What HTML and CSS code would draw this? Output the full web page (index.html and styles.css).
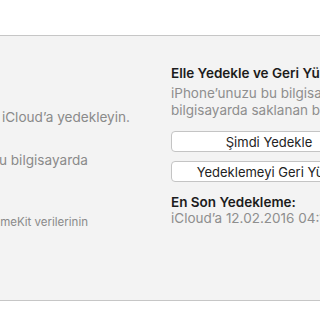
FILE: index.html
```html
<!DOCTYPE html>
<html lang="tr">
<head>
    <meta charset="UTF-8">
    <meta name="viewport" content="width=device-width, initial-scale=1.0">
    <title>Yedeklemeler</title>
    <link rel="stylesheet" href="styles.css">
</head>
<body>

    <div class="top_bar"></div>

    <div class="panel">
        <div class="left_col">
            <div class="line line_1"><span>En önemli verilerinizi iCloud’a yedekleyin.</span></div>
            <div class="line line_2"><span>iPhone’unuzun tam yedeklemesi bu bilgisayarda</span></div>
            <div class="line line_3 small"><span>Hesap parolalarının, Sağlık ve HomeKit verilerinin</span></div>
        </div>

        <div class="right_col">
            <h3 class="title">Elle Yedekle ve Geri Yükle</h3>
            <p class="desc">iPhone’unuzu bu bilgisayara elle yedekleyin veya bu<br>bilgisayarda saklanan bir yedeklemeyi geri yükleyin.</p>
            <div class="buttons">
                <button class="btn">Şimdi Yedekle</button>
                <button class="btn">Yedeklemeyi Geri Yükle</button>
            </div>
            <h3 class="title last_title">En Son Yedekleme:</h3>
            <p class="desc last_desc">iCloud’a 12.02.2016 04:12</p>
        </div>
    </div>

    <div class="bottom_bar"></div>

</body>
</html>
```

FILE: styles.css
```css
* {
    margin: 0px;
    padding: 0px;
    box-sizing: border-box;
}

body {
    width: 320px;
    height: 320px;
    overflow: hidden;
    background-color: #ffffff;
    font-family: Inter, "Noto Sans", sans-serif;
    font-size: 13px;
}

.top_bar {
    height: 36px;
    border-bottom: 1px solid #c6c6c6;
}

.panel {
    display: flex;
    height: 265px;
    background-color: #f3f3f3;
    border-bottom: 1px solid #c6c6c6;
}

.left_col {
    width: 130px;
    flex: none;
    padding-top: 73px;
    color: #8a8a8a;
    font-size: 13.6px;
}

.line {
    display: flex;
    justify-content: flex-end;
    white-space: nowrap;
    height: 16px;
    line-height: 16px;
}

.line_2 {
    margin-top: 27px;
    padding-right: 42px;
}

.line_3 {
    margin-top: 46px;
    padding-right: 42px;
}

.small {
    font-size: 11.5px;
}

.right_col {
    width: 300px;
    flex: none;
    margin-left: 41px;
    padding-top: 29px;
    white-space: nowrap;
}

.title {
    font-size: 13.5px;
    font-weight: 600;
    color: #1c1c1c;
    line-height: 16px;
}

.desc {
    color: #8e8e8e;
    font-size: 13.5px;
    line-height: 16.5px;
    margin-top: 4px;
}

.buttons {
    display: flex;
    flex-direction: column;
    gap: 9px;
    margin-top: 13px;
}

.btn {
    width: 196px;
    height: 21px;
    background-color: #ffffff;
    border: 1px solid #c4c4c4;
    border-radius: 4px;
    font-family: Inter, "Noto Sans", sans-serif;
    font-size: 13px;
    color: #222222;
}

.last_title {
    margin-top: 12px;
}

.last_desc {
    margin-top: 0px;
    line-height: 16px;
}
```
